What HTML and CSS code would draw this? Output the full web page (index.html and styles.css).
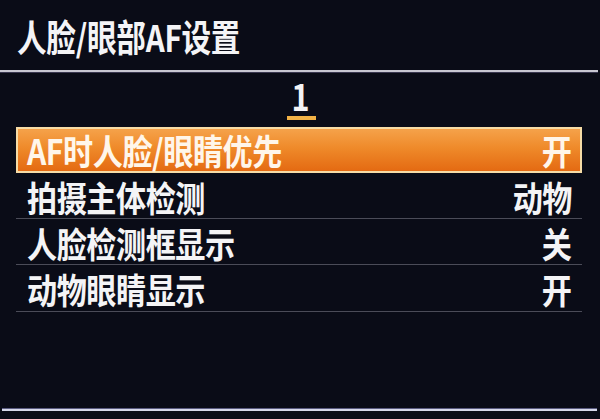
FILE: index.html
```html
<!DOCTYPE html>
<html lang="zh-CN">
<head>
<meta charset="utf-8">
<title>人脸/眼部AF设置</title>
<link rel="stylesheet" href="styles.css">
</head>
<body>
<div class="screen">
  <header class="header">
    <h1 class="title">人脸/眼部AF设置</h1>
  </header>
  <div class="rule"></div>
  <div class="tabs">
    <div class="tab"><span class="num">1</span></div>
  </div>
  <ul class="menu">
    <li class="item selected"><span class="label">AF时人脸/眼睛优先</span><span class="value">开</span></li>
    <li class="item"><span class="label">拍摄主体检测</span><span class="value">动物</span></li>
    <li class="item"><span class="label">人脸检测框显示</span><span class="value">关</span></li>
    <li class="item"><span class="label">动物眼睛显示</span><span class="value">开</span></li>
  </ul>
  <div class="spacer"></div>
  <div class="rule bottom"></div>
  <div class="footer"></div>
</div>
</body>
</html>
```

FILE: styles.css
```css
html, body {
  margin: 0;
  padding: 0;
  background: #090b16;
}
.screen {
  width: 600px;
  height: 419px;
  overflow: hidden;
  display: flex;
  flex-direction: column;
  background: #0a0c17;
  font-family: "Noto Sans CJK SC", "Noto Sans", sans-serif;
  font-weight: 700;
  color: #f4f4f6;
}
.header {
  height: 70px;
  display: flex;
  align-items: center;
  padding-left: 17px;
  box-sizing: border-box;
}
.title {
  margin: 0;
  font-size: 37px;
  font-weight: 700;
  letter-spacing: -0.3px;
  line-height: 1;
  padding-top: 2px;
  transform: scaleX(0.8);
  transform-origin: left center;
  white-space: nowrap;
}
.rule {
  height: 2px;
  background: #c9c8d2;
  margin-right: 2px;
  box-shadow: 0 1px 0 #3a3850;
}
.tabs {
  height: 55px;
  display: flex;
  justify-content: center;
  align-items: flex-end;
}
.tab {
  width: 29px;
  height: 44px;
  display: flex;
  justify-content: center;
  align-items: center;
  margin-bottom: 7px;
  border-bottom: 4px solid #f2b246;
  margin-left: 2px;
  box-sizing: border-box;
}
.num {
  font-size: 36px;
  line-height: 1;
  transform: scaleX(0.85);
  padding-bottom: 2px;
}
.menu {
  list-style: none;
  margin: 0 18px 0 16px;
  padding: 0;
}
.item {
  height: 46px;
  display: flex;
  align-items: center;
  justify-content: space-between;
  padding: 0 10px 0 11px;
  box-sizing: border-box;
  border-bottom: 1px solid #4b4c58;
  font-size: 35px;
  line-height: 1;
  letter-spacing: -0.5px;
  white-space: nowrap;
}
.label, .value {
  display: inline-block;
  padding-top: 1px;
  transform: scaleX(0.86);
}
.label {
  transform-origin: left center;
}
.value {
  transform-origin: right center;
}
.item.selected {
  border: 2px solid #f6dca6;
  background: linear-gradient(to bottom, #f5a24a 0%, #ef8a2a 45%, #e46a12 100%);
  color: #fff6ea;
  padding: 0 8px 0 9px;
}
.item.selected .label, .item.selected .value {
  padding-top: 0;
  padding-bottom: 2px;
}
.item:last-child {
  height: 47px;
}
.spacer {
  flex: 1;
}
.rule.bottom {
  background: #d6d8ea;
  margin: 0 3px 0 2px;
  box-shadow: 0 -1px 0 #5a5c80;
}
.footer {
  height: 8px;
}
```
